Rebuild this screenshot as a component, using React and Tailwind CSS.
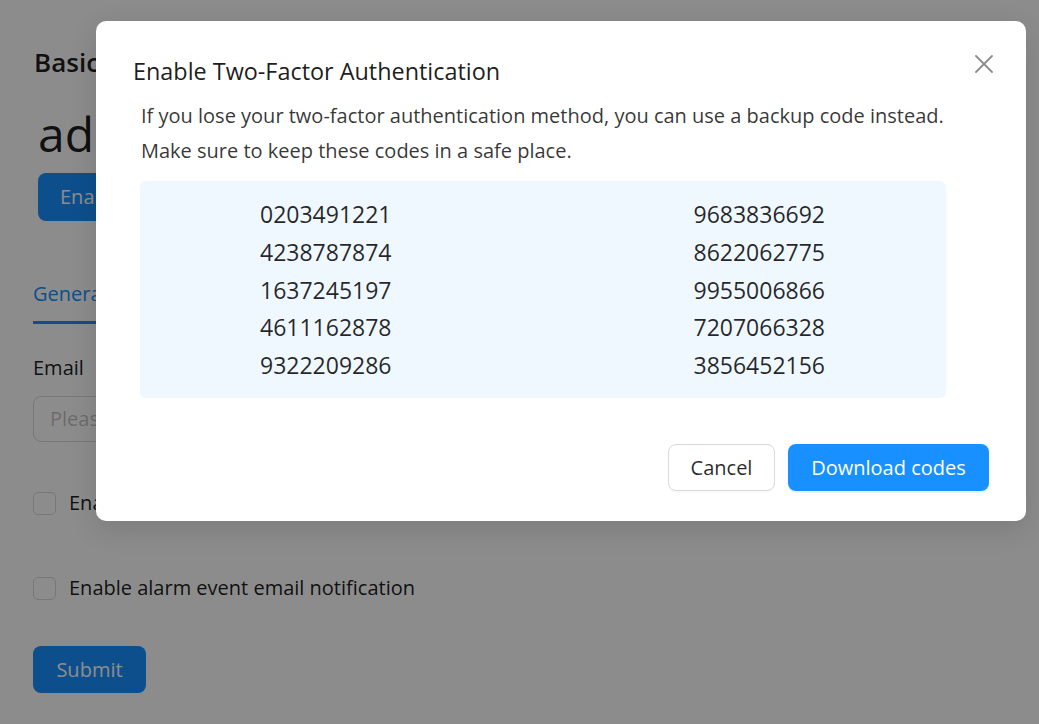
import React from "react";

const codesLeft = ["0203491221", "4238787874", "1637245197", "4611162878", "9322209286"];
const codesRight = ["9683836692", "8622062775", "9955006866", "7207066328", "3856452156"];

export default function App() {
  return (
    <div
      className="relative w-[1039px] h-[724px] overflow-hidden bg-white text-[#1f1f1f]"
      style={{ fontFamily: '"Open Sans", "Noto Sans", sans-serif' }}
    >
      {/* Background page */}
      <div className="pl-[33px] pt-[44px]">
        <div className="text-[26px] font-semibold leading-[36px] text-black/90 pl-[1px]">Basic Information</div>
        <div className="mt-[24px] text-[48px] font-medium leading-[60px] text-black/90 pl-[5px]">admin</div>
        <div className="mt-[9px] pl-[5px]">
          <button className="h-[48px] px-[22px] rounded-[8px] bg-[#1890ff] text-white text-[20px]">
            Enable Two-Factor Authentication
          </button>
        </div>
        <div className="mt-[58px] border-b border-[#f0f0f0] relative w-[900px]">
          <div className="inline-block pb-[12px] text-[20px] text-[#1890ff] border-b-[3px] border-[#1890ff] -mb-px">
            General settings
          </div>
        </div>
        <div className="mt-[29px] text-[20px] leading-[30px] text-black/90">Email</div>
        <div className="mt-[13px] w-[600px] h-[46px] rounded-[8px] border border-[#d9d9d9] px-[16px] flex items-center text-[20px] text-black/25">
          Please enter your email
        </div>
        <div className="mt-[46px] flex items-center gap-[13px]">
          <span className="w-[23px] h-[23px] rounded-[5px] border border-[#d9d9d9] bg-white" />
          <span className="text-[20px] text-black/90">Enable login email notification</span>
        </div>
        <div className="mt-[55px] flex items-center gap-[13px]">
          <span className="w-[23px] h-[23px] rounded-[5px] border border-[#d9d9d9] bg-white" />
          <span className="text-[20px] text-black/90">Enable alarm event email notification</span>
        </div>
        <div className="mt-[43px]">
          <button className="w-[113px] h-[47px] rounded-[8px] bg-[#1890ff] text-white text-[20px]">Submit</button>
        </div>
      </div>

      {/* Overlay */}
      <div className="absolute inset-0 bg-black/45" />

      {/* Modal */}
      <div className="absolute left-[96px] top-[21px] w-[930px] h-[500px] rounded-[10px] bg-white shadow-[0_8px_28px_rgba(0,0,0,0.12)]">
        <div className="flex items-start justify-between pl-[37px] pr-[30px] pt-[34px]">
          <div className="text-[23.4px] font-medium leading-[32px] text-black/90">Enable Two-Factor Authentication</div>
          <button className="mt-[-3px] w-[24px] h-[24px] flex items-center justify-center text-black/45">
            <svg width="20" height="20" viewBox="0 0 20 20" fill="none" stroke="currentColor" strokeWidth="1.8" strokeLinecap="round">
              <path d="M2 2 L18 18 M18 2 L2 18" />
            </svg>
          </button>
        </div>
        <div className="pl-[45px] pr-[60px] mt-[11px] text-[20px] leading-[35px] text-black/80">
          <p>If you lose your two-factor authentication method, you can use a backup code instead.</p>
          <p>Make sure to keep these codes in a safe place.</p>
        </div>
        <div className="ml-[44px] mr-[80px] mt-[13px] h-[217px] rounded-[6px] bg-[#eff7ff] pl-[120px] pr-[121px] pt-[15px] flex justify-between text-[23px] leading-[37.75px] text-black/85">
          <div className="flex flex-col items-start">
            {codesLeft.map((c) => (
              <span key={c}>{c}</span>
            ))}
          </div>
          <div className="flex flex-col items-end">
            {codesRight.map((c) => (
              <span key={c}>{c}</span>
            ))}
          </div>
        </div>
        <div className="flex justify-end gap-[13px] pr-[37px] mt-[46px]">
          <button className="w-[107px] h-[47px] rounded-[8px] border border-[#d9d9d9] bg-white text-[20px] text-black/85 shadow-[0_2px_0_rgba(0,0,0,0.02)]">
            Cancel
          </button>
          <button className="w-[201px] h-[47px] rounded-[8px] bg-[#1890ff] text-white text-[20px] shadow-[0_2px_0_rgba(5,145,255,0.1)]">
            Download codes
          </button>
        </div>
      </div>
    </div>
  );
}
